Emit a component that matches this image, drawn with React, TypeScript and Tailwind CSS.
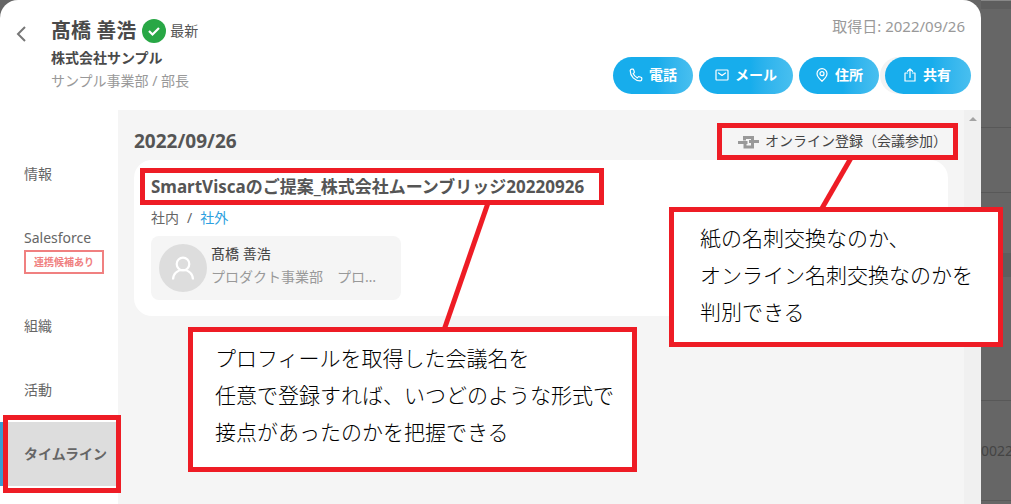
import type { ReactNode } from 'react'

const NAV = [
  { id: 'info', label: '情報' },
  { id: 'salesforce', label: 'Salesforce', badge: '連携候補あり' },
  { id: 'org', label: '組織' },
  { id: 'activity', label: '活動' },
  { id: 'timeline', label: 'タイムライン', active: true },
]

function Icon({ children }: { children: ReactNode }) {
  return (
    <svg
      viewBox="0 0 14 14"
      className="size-3.5 shrink-0"
      fill="none"
      stroke="currentColor"
      strokeWidth="1.2"
      strokeLinecap="round"
      strokeLinejoin="round"
      aria-hidden="true"
    >
      {children}
    </svg>
  )
}

function PhoneIcon() {
  return (
    <Icon>
      <path d="M1.2 2.8C1.2 8.200 5.800 12.800 11.200 12.800c.9 0 1.600-.7 1.600-1.600v-1c0-.4-.3-.8-.7-.9l-2-.6c-.4-.1-.8 0-1 .3l-.7.9C6.700 9.100 4.900 7.300 4.100 5.600l.9-.7c.3-.2.4-.6.3-1l-.6-2c-.1-.4-.5-.7-.9-.7h-1c-.9 0-1.600.7-1.600 1.600z" />
    </Icon>
  )
}

function MailIcon() {
  return (
    <Icon>
      <rect x="1" y="2" width="12" height="10" rx="0.8" />
      <path d="m3.500 5 3.500 2.500L10.500 5" />
    </Icon>
  )
}

function PinIcon() {
  return (
    <Icon>
      <path d="M7 13.300C4 10.500 2 8.200 2 5.700a5 5 0 0 1 10 0C12 8.200 10 10.500 7 13.300z" />
      <circle cx="7" cy="5.700" r="2" />
    </Icon>
  )
}

function ShareIcon() {
  return (
    <Icon>
      <path d="M4.500 5H2v8h10V5H9.500M7 9.500V1M4.500 3.300 7 .9l2.500 2.400" />
    </Icon>
  )
}

const ACTIONS = [
  { label: '電話', icon: <PhoneIcon />, look: 'px-4' },
  { label: 'メール', icon: <MailIcon />, look: 'px-4' },
  { label: '住所', icon: <PinIcon />, look: 'px-4' },
  { label: '共有', icon: <ShareIcon />, look: 'pl-[18px] pr-5 shadow-[-5px_0_0_#f3f3f3]' },
]

function Header() {
  return (
    <header className="flex h-[110px] justify-between pr-2.5">
      <div className="flex">
        <button type="button" aria-label="戻る" className="flex h-[68px] w-[51px] items-center pl-4 text-[#777]">
          <svg viewBox="0 0 11 16" className="h-4 w-[11px]" fill="none" stroke="currentColor" strokeWidth="2" aria-hidden="true">
            <path d="M9 1 2 8l7 7" />
          </svg>
        </button>
        <div className="pt-4">
          <div className="flex h-[30px] items-center">
            <h1 className="text-xl font-bold text-[#4a4a4a]">髙橋 善浩</h1>
            <svg viewBox="0 0 24 24" className="ml-1.5 size-6" aria-hidden="true">
              <circle cx="12" cy="12" r="12" fill="#28a745" />
              <path d="m7 12 3.500 3.500L17 9" fill="none" stroke="#fff" strokeWidth="2.200" />
            </svg>
            <span className="ml-1 text-sm text-[#555]">最新</span>
          </div>
          <p className="text-sm leading-6 font-bold text-[#4a4a4a]">株式会社サンプル</p>
          <p className="text-sm leading-[22px] text-[#999]">サンプル事業部 / 部長</p>
        </div>
      </div>
      <div className="flex flex-col items-end pt-4">
        <p className="pr-1.5 text-[15px] leading-5 text-[#999]">取得日: 2022/09/26</p>
        <div className="mt-[21px] flex gap-1.5">
          {ACTIONS.map(a => (
            <button
              key={a.label}
              type="button"
              className={`flex h-[37px] items-center gap-1.5 rounded-full bg-linear-to-r from-[#17adec] from-55% to-[#48bfef] pb-0.5 text-sm font-bold text-white ${a.look}`}
            >
              {a.icon}
              {a.label}
            </button>
          ))}
        </div>
      </div>
    </header>
  )
}

function SideNav() {
  return (
    <nav className="w-[118px] shrink-0 pt-8 text-sm text-[#666]">
      {NAV.map(n => (
        <a
          key={n.id}
          href={`#${n.id}`}
          aria-current={n.active ? 'page' : undefined}
          className={`relative block pl-6 leading-[64px] ${n.active ? 'bg-[#ddd] font-bold' : ''}`}
        >
          {n.label}
          {n.badge && (
            <span className="-mt-5 mb-5 block h-6 w-20 border-2 border-[#f08080] text-center text-[10px] leading-5 font-bold text-[#f08080]">
              {n.badge}
            </span>
          )}
          {n.active && (
            <>
              <span className="absolute inset-y-0 left-0 w-[3px] bg-[#3a9bd0]" />
              <span className="absolute -inset-y-[7px] -right-[3px] left-[3px] border-5 border-[#ee1c25]" />
            </>
          )}
        </a>
      ))}
    </nav>
  )
}

function MeetingIcon() {
  return (
    <svg viewBox="0 0 21 15" className="h-[15px] w-[21px]" fill="none" stroke="#999" strokeWidth="3" aria-hidden="true">
      <path d="M6.500 6.500V3.500h8v3M0 8.500h9.500M11 7.500h10M7 10v3h7.500V9" />
    </svg>
  )
}

function Timeline() {
  return (
    <main className="min-w-0 flex-1 bg-[#f5f5f5] px-4">
      <div className="flex h-[50px] items-center justify-between pt-3">
        <h2 className="text-[19px] font-bold text-[#555]">2022/09/26</h2>
        <p className="-mr-2.5 flex h-[37px] items-center gap-1.5 border-5 border-[#ee1c25] pr-1.5 pl-4 text-sm text-[#444]">
          <MeetingIcon />
          オンライン登録（会議参加）
        </p>
      </div>
      <article className="h-[156px] rounded-[18px] bg-white pt-2 pl-1.5">
        <h3 className="flex h-[37px] w-[464px] items-center border-5 border-[#ee1c25] pl-1.5 text-[17px] font-bold whitespace-nowrap text-[#555]">
          SmartViscaのご提案_株式会社ムーンブリッジ20220926
        </h3>
        <div className="pl-[11px] text-sm">
          <p className="flex h-[26px] items-center gap-2 text-[#666]">
            <span>社内</span>
            <span>/</span>
            <a href="#external" className="text-[#2d9fe0]">社外</a>
          </p>
          <div className="mt-[5px] flex h-16 w-[250px] items-center gap-1 rounded-lg bg-[#f5f5f5] px-2">
            <svg viewBox="0 0 48 48" className="size-12 shrink-0" fill="none" aria-hidden="true">
              <circle cx="24" cy="24" r="24" fill="#ddd" />
              <g stroke="#fff" strokeWidth="2.200">
                <circle cx="24" cy="20" r="6.300" />
                <path d="M14 35.500c0-5.500 4-9.500 10-9.500s10 4 10 9.500" />
              </g>
            </svg>
            <div className="h-12 leading-[23px]">
              <p className="-mt-0.5 text-[#444]">髙橋 善浩</p>
              <p className="text-[#999]">プロダクト事業部　プロ…</p>
            </div>
          </div>
        </div>
      </article>
    </main>
  )
}

function Backdrop() {
  return (
    <div className="w-[30px] shrink-0 overflow-hidden text-sm text-[#444]">
      <div className="h-[9px] border-t border-[#888] bg-[#5e5e5e]" />
      <div className="h-[119px] border-b border-[#585858]" />
      <div className="h-[65px] border-b border-[#585858]" />
      <div className="mt-[60px] h-6 bg-[#5e5e5e]" />
      <div className="h-[124px] border-b border-[#585858]" />
      <div className="flex h-[100px] items-center border-b border-[#585858]">0022</div>
    </div>
  )
}

function Callout({ lines, className }: { lines: string[]; className: string }) {
  return (
    <div className={`absolute border-5 border-[#ee1c25] bg-white text-[21px] leading-[37px] font-light whitespace-nowrap text-black ${className}`}>
      {lines.map(l => (
        <p key={l}>{l}</p>
      ))}
    </div>
  )
}

export default function App() {
  return (
    <div className="relative flex min-h-screen overflow-hidden bg-[#666] font-['Noto_Sans','Noto_Sans_CJK_JP',sans-serif]">
      <div className="flex min-w-0 flex-1 flex-col overflow-hidden rounded-t-[18px] bg-white">
        <Header />
        <div className="flex flex-1">
          <SideNav />
          <Timeline />
          <div className="flex w-[17px] shrink-0 justify-center bg-[#f0f0f0] pt-[7px]">
            <svg viewBox="0 0 8 4" className="h-1 w-2" aria-hidden="true">
              <path d="M0 4 4 0l4 4z" fill="#a3a3a3" />
            </svg>
          </div>
        </div>
      </div>
      <Backdrop />

      <svg className="absolute top-[203px] left-[440px] h-[127px] w-[52px]" viewBox="0 0 52 127" aria-hidden="true">
        <path d="M48 0 4 127" stroke="#ee1c25" strokeWidth="5" />
      </svg>
      <svg className="absolute top-[158px] right-[156px] h-[52px] w-[38px]" viewBox="0 0 38 52" aria-hidden="true">
        <path d="M34 0 4 52" stroke="#ee1c25" strokeWidth="5" />
      </svg>
      <Callout
        className="top-[327px] left-[188px] h-[145px] w-[449px] pt-2 pl-[22px]"
        lines={['プロフィールを取得した会議名を', '任意で登録すれば、いつどのような形式で', '接点があったのかを把握できる']}
      />
      <Callout
        className="top-[207px] right-2 h-[140px] w-[334px] pt-2 pl-[26px]"
        lines={['紙の名刺交換なのか、', 'オンライン名刺交換なのかを', '判別できる']}
      />
    </div>
  )
}
